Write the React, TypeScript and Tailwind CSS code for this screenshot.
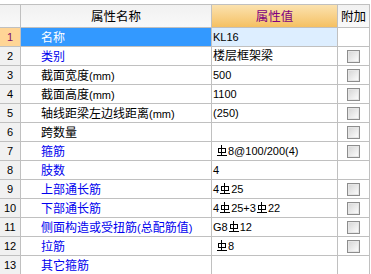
import React from 'react';

// 属性编辑表格（构件属性）
type Row = {
  no: number;
  name: string;
  value: string; // '#' 表示钢筋等级符号
  tone: 'sel' | 'blue' | 'black';
  check: boolean;
  indent?: boolean;
};

const rows: Row[] = [
  { no: 1, name: '名称', value: 'KL16', tone: 'sel', check: false },
  { no: 2, name: '类别', value: '楼层框架梁', tone: 'blue', check: true },
  { no: 3, name: '截面宽度(mm)', value: '500', tone: 'black', check: true },
  { no: 4, name: '截面高度(mm)', value: '1100', tone: 'black', check: true },
  { no: 5, name: '轴线距梁左边线距离(mm)', value: '(250)', tone: 'black', check: true },
  { no: 6, name: '跨数量', value: '', tone: 'black', check: true },
  { no: 7, name: '箍筋', value: '#8@100/200(4)', tone: 'blue', check: true, indent: true },
  { no: 8, name: '肢数', value: '4', tone: 'blue', check: false },
  { no: 9, name: '上部通长筋', value: '4#25', tone: 'blue', check: true },
  { no: 10, name: '下部通长筋', value: '4#25+3#22', tone: 'blue', check: true },
  { no: 11, name: '侧面构造或受扭筋(总配筋值)', value: 'G8#12', tone: 'blue', check: true },
  { no: 12, name: '拉筋', value: '#8', tone: 'blue', check: true, indent: true },
  { no: 13, name: '其它箍筋', value: '', tone: 'blue', check: false },
];

// 三级钢筋符号（CSS 画出）
const Rebar = () => (
  <span className="relative inline-block h-[12px] w-[12px] align-[-2px]">
    <span className="absolute left-[2px] top-[3px] h-[5px] w-[8px] border border-black" />
    <span className="absolute left-[5px] top-0 h-[11px] w-px bg-black" />
    <span className="absolute left-[1px] top-[10px] h-px w-[10px] bg-black" />
  </span>
);

const Value = ({ text }: { text: string }) => {
  const parts = text.split('#');
  return (
    <>
      {parts.map((p, i) => (
        <React.Fragment key={i}>
          {i > 0 && <Rebar />}
          {p}
        </React.Fragment>
      ))}
    </>
  );
};

// 名称里的半角部分用窄字体
const Name = ({ text }: { text: string }) => {
  const parts = text.split(/([()a-z]+)/);
  return (
    <>
      {parts.map((p, i) =>
        /^[()a-z]+$/.test(p) ? (
          <span key={i} className="font-['Liberation_Sans',sans-serif] text-[11px]">
            {p}
          </span>
        ) : (
          <React.Fragment key={i}>{p}</React.Fragment>
        )
      )}
    </>
  );
};

const CheckBox = () => (
  <span className="inline-block h-[13px] w-[13px] border border-[#8d8d8d] bg-gradient-to-br from-[#d4d4d4] to-white shadow-[inset_0_0_0_1px_#e6e6e6]" />
);

const App = () => {
  return (
    <div className="h-[274px] w-[371px] overflow-hidden bg-white pt-[4px] font-['Noto_Sans_CJK_SC',sans-serif] text-[12px] text-black">
      <div className="w-[370px] border-t border-[#c0c0c0]">
        {/* 表头 */}
        <div className="flex h-[23px] border-b border-[#c0c0c0] text-[12.5px]">
          <div className="w-[21px] border-r border-[#c0c0c0] bg-gradient-to-b from-[#f1f1f1] to-[#f9f9f9]" />
          <div className="flex w-[191px] items-center justify-center border-r border-[#c0c0c0] bg-gradient-to-b from-[#f1f1f1] to-[#f9f9f9]">
            属性名称
          </div>
          <div className="flex w-[126px] items-center justify-center border-r border-[#c0c0c0] bg-gradient-to-b from-[#fbe2ae] to-[#f5c061] text-[#800080]">
            属性值
          </div>
          <div className="flex w-[32px] items-center justify-center border-r border-[#c0c0c0] bg-gradient-to-b from-[#f1f1f1] to-[#f9f9f9]">
            附加
          </div>
        </div>

        {rows.map((r) => {
          const sel = r.tone === 'sel';
          return (
            <div key={r.no} className="flex h-[19px] border-b border-[#c0c0c0]">
              <div
                className={`flex w-[21px] items-center justify-center border-r border-[#c0c0c0] font-['Liberation_Sans',sans-serif] text-[11px] ${
                  sel ? 'bg-[#ffd596] text-[#80106a]' : 'bg-[#f1f1f1]'
                }`}
              >
                {r.no}
              </div>
              <div
                className={`flex w-[191px] items-center whitespace-nowrap border-r border-[#c0c0c0] pl-[20px] ${
                  sel ? 'bg-[#3399ff] text-white' : r.tone === 'blue' ? 'text-[#0000ee]' : ''
                }`}
              >
                <span>
                  <Name text={r.name} />
                </span>
              </div>
              <div
                className={`flex w-[126px] items-center whitespace-nowrap border-r border-[#c0c0c0] font-['Liberation_Sans','Noto_Sans_CJK_SC',sans-serif] text-[11px] ${
                  r.indent ? 'pl-[4px]' : 'pl-px'
                } ${sel ? 'bg-[#ddeeff]' : ''}`}
              >
                {/[\u4e00-\u9fff]/.test(r.value) ? (
                  <span className="text-[12px]">{r.value}</span>
                ) : (
                  <span>
                    <Value text={r.value} />
                  </span>
                )}
              </div>
              <div className="flex w-[32px] items-center justify-center border-r border-[#c0c0c0]">
                {r.check && <CheckBox />}
              </div>
            </div>
          );
        })}
      </div>
    </div>
  );
};

export default App;
